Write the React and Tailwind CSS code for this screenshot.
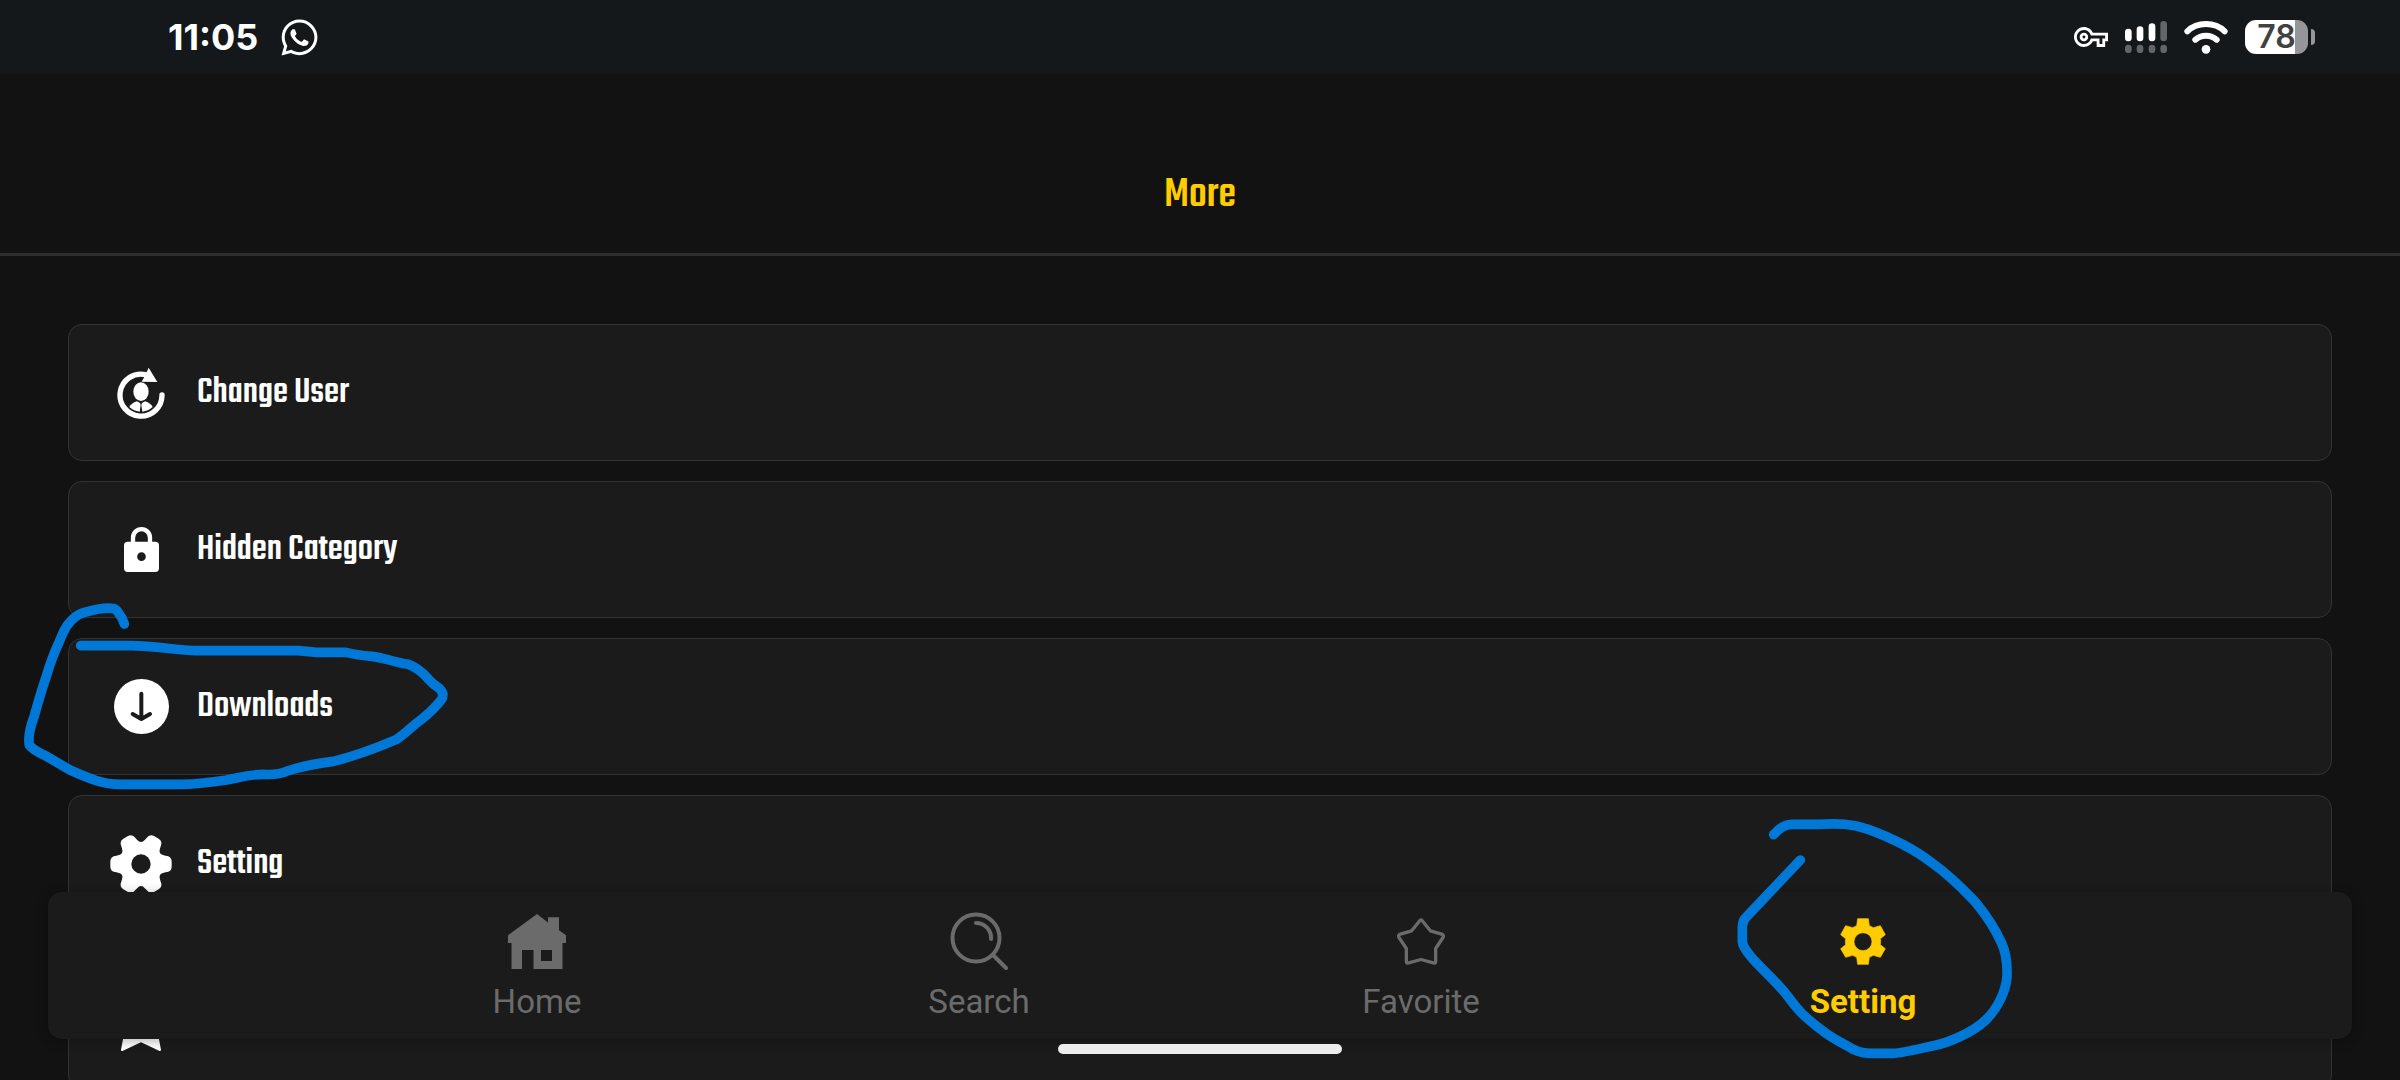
import React from "react";
import { FaWhatsapp } from "react-icons/fa";
import { MdOutlineVpnKey } from "react-icons/md";

const CONDENSED = "font-['Teko','Roboto_Condensed','Liberation_Sans_Narrow','Liberation_Sans',sans-serif]";

function SignalIcon() {
  return (
    <svg className="h-8 w-[42px]" viewBox="0 0 126 96" aria-hidden="true">
      <g fill="#fff">
        <rect x="0" y="23" width="20" height="38" rx="10" />
        <rect x="35" y="16" width="20" height="45" rx="10" />
        <rect x="71" y="7" width="20" height="54" rx="10" />
      </g>
      <g fill="#636568">
        <rect x="106" y="0" width="20" height="61" rx="10" />
        <rect x="0" y="71" width="20" height="25" rx="10" />
        <rect x="35" y="71" width="20" height="25" rx="10" />
        <rect x="71" y="71" width="20" height="25" rx="10" />
        <rect x="106" y="71" width="20" height="25" rx="10" />
      </g>
    </svg>
  );
}

function WifiIcon() {
  return (
    <svg className="h-[33px] w-11" viewBox="0 0 132 99" fill="none" stroke="#fff" strokeWidth="18" strokeLinecap="round" aria-hidden="true">
      <path d="M10 31C40 2 92 2 122 31" />
      <path d="M34 56C52 40 80 40 98 56" />
      <circle cx="66" cy="85" r="13" fill="#fff" stroke="none" />
    </svg>
  );
}

function Battery() {
  return (
    <div className="flex items-center gap-[3px]">
      <div className="flex h-[34px] w-[63px] items-center justify-center rounded-[11px] bg-linear-to-r from-white from-80% to-[#949699] to-80%">
        <span className="font-['Inter',sans-serif] text-[32px] font-semibold leading-8 text-[#424242]">78</span>
      </div>
      <span className="h-4 w-1 rounded-r-full bg-[#949699]" />
    </div>
  );
}

function ChangeUserIcon() {
  return (
    <svg className="h-[52px] w-12" viewBox="0 0 144 156" fill="#fff" aria-hidden="true">
      <path d="M135 84A63 63 0 1 1 86 23" fill="none" stroke="#fff" strokeWidth="16" strokeLinecap="round" />
      <path d="M95 2L121 45L74 44L84 26Z" />
      <ellipse cx="72" cy="74" rx="23" ry="28" />
      <path d="M60 103L69 108L71 114L68 134Q50 132 37 120Q42 109 60 103Z" />
      <path d="M84 103L75 108L73 114L76 134Q94 132 107 120Q102 109 84 103Z" />
    </svg>
  );
}

function LockIcon() {
  return (
    <svg className="h-[45px] w-[35px]" viewBox="0 0 105 135" fill="#fff" aria-hidden="true">
      <path d="M27 50V32a25.500 25.500 0 0 1 51 0V50" fill="none" stroke="#fff" strokeWidth="13" />
      <path fillRule="evenodd" d="M11 44H94Q105 44 105 55V124Q105 135 94 135H11Q0 135 0 124V55Q0 44 11 44ZM52.500 76a13 13 0 1 0 0 26a13 13 0 1 0 0-26Z" />
    </svg>
  );
}

function DownloadIcon() {
  return (
    <svg className="h-[55px] w-[55px]" viewBox="0 0 165 165" aria-hidden="true">
      <circle cx="82.500" cy="82.500" r="82.500" fill="#fff" />
      <path d="M82 44V118M56 105L82 120L108 105" fill="none" stroke="#1b1b1b" strokeWidth="12" strokeLinecap="round" strokeLinejoin="round" />
    </svg>
  );
}

function CogIcon() {
  return (
    <svg className="h-[62px] w-[62px] shrink-0" viewBox="-93 -93 186 186" fill="#fff" aria-hidden="true">
      {[0, 60, 120, 180, 240, 300].map((angle) => (
        <path
          key={angle}
          transform={`rotate(${angle})`}
          d="M0 0L57 -33C60 -28 66 -27 74 -25Q92 -23 92 -8V8Q92 23 74 25C66 27 60 28 57 33Z"
        />
      ))}
      <circle r="65" />
      <circle r="29" fill="#1b1b1b" />
    </svg>
  );
}

function RateIcon() {
  return (
    <svg className="h-[60px] w-[62px]" viewBox="0 0 62 60" fill="#fff" stroke="#fff" strokeWidth="2" strokeLinejoin="round" aria-hidden="true">
      <path d="M31 2L39 21L60 23L46 38L50 59L31 50L12 59L16 38L2 23L23 21Z" />
    </svg>
  );
}

function HomeIcon() {
  return (
    <svg className="h-[55px] w-[58px]" viewBox="0 0 58 55" fill="currentColor" aria-hidden="true">
      <path fillRule="evenodd" d="M29 0L40 8.500V3.300H51V16.300L58 21.300V29H54.500V55H25.500V36H14V55H3.500V29H0V21.300ZM33 36V47H44V36Z" />
    </svg>
  );
}

function SearchIcon() {
  return (
    <svg className="h-[58px] w-[58px]" viewBox="0 0 58 58" fill="none" stroke="currentColor" strokeWidth="4" strokeLinecap="round" aria-hidden="true">
      <circle cx="26" cy="26" r="23.500" />
      <path d="M26 11A15 15 0 0 1 41 27M43 43L56 56" />
    </svg>
  );
}

function StarIcon() {
  return (
    <svg className="h-[47px] w-12" viewBox="0 0 144 140" fill="none" stroke="currentColor" strokeWidth="10" strokeLinejoin="round" aria-hidden="true">
      <path d="M67 9Q72 2 77 9L100 38L134 48Q142 51 138 58L116 91V130Q116 137 109 134L72 124L35 134Q28 137 28 130V91L6 58Q2 51 10 48L44 38Z" />
    </svg>
  );
}

function SettingsIcon() {
  return (
    <svg className="h-[47px] w-[46px]" viewBox="420 355 138 141" fill="currentColor" aria-hidden="true">
      <path
        fillRule="evenodd"
        stroke="currentColor"
        strokeWidth="2"
        strokeLinejoin="round"
        d="M473 357H505L508 378L520 384L541 378L556 405L541 417Q543 426 541 435L556 447L541 473L520 467L508 473L505 494H473L470 473L458 467L437 473L422 447L437 435Q435 426 437 417L422 405L437 378L458 384L470 378ZM489 399a27 27 0 1 0 0 54a27 27 0 1 0 0-54Z"
      />
    </svg>
  );
}

function DownloadsMark() {
  return (
    <svg
      className="pointer-events-none absolute -left-[68px] -top-12 z-10 h-[210px] w-[480px]"
      viewBox="0 0 1440 630"
      fill="none"
      stroke="#0078d8"
      strokeWidth="29"
      strokeLinecap="round"
      strokeLinejoin="round"
      aria-hidden="true"
    >
      <path d="M373 102Q368 84 357 71Q349 55 336 55Q306 52 250 68Q225 75 201 107Q188 127 181 148Q155 205 143 246Q116 328 103 378Q82 433 88 465Q98 480 138 498L210 540C270 567 310 583 360 583H550Q600 582 680 570C720 563 740 554 790 553Q835 556 862 543Q915 525 1000 514C1070 497 1130 474 1188 449C1210 437 1240 405 1262 390Q1300 360 1324 329Q1335 312 1318 295Q1298 282 1286 268Q1260 237 1225 223C1180 216 1150 202 1115 199Q1070 195 1038 187H950L895 182H590C530 182 460 166 390 167H242" />
    </svg>
  );
}

function SettingMark() {
  return (
    <svg
      className="pointer-events-none absolute -top-[92px] left-1/2 -ml-[163px] h-[280px] w-[360px]"
      viewBox="0 0 1080 840"
      fill="none"
      stroke="#0078d8"
      strokeWidth="29"
      strokeLinecap="round"
      strokeLinejoin="round"
      aria-hidden="true"
    >
      <path d="M221 104Q246 74 275 73H345C420 70 455 70 505 88C570 112 640 145 695 188C740 220 790 268 825 305C850 335 885 385 905 430C919 460 922 500 921 530C918 570 895 625 856 661C815 700 740 730 700 737C650 748 610 759 580 760H510C480 759 465 752 440 737C405 719 380 703 358 685C310 648 295 632 262 587C225 540 180 503 152 469Q128 440 127 425V380Q128 360 140 350L301 180" />
    </svg>
  );
}

const rows = [
  { label: "Change User", Icon: ChangeUserIcon },
  { label: "Hidden Category", Icon: LockIcon },
  { label: "Downloads", Icon: DownloadIcon, Mark: DownloadsMark },
  { label: "Setting", Icon: CogIcon },
  { label: "Rate Us", Icon: RateIcon },
];

const tabs = [
  { label: "Home", Icon: HomeIcon },
  { label: "Search", Icon: SearchIcon },
  { label: "Favorite", Icon: StarIcon },
  { label: "Setting", Icon: SettingsIcon, active: true, Mark: SettingMark },
];

export default function App() {
  return (
    <div className="relative h-screen overflow-hidden bg-[#121212] text-white">
      <div className="flex h-[74px] items-center justify-between bg-[#14181b] pl-[168px] pr-[85px]">
        <div className="flex items-center gap-[21px]">
          <time className="font-['Inter',sans-serif] text-4xl font-bold">11:05</time>
          <FaWhatsapp className="size-[41px]" aria-label="WhatsApp" />
        </div>
        <div className="flex items-center gap-[17px]">
          <MdOutlineVpnKey className="size-[34px]" aria-hidden="true" />
          <SignalIcon />
          <WifiIcon />
          <Battery />
        </div>
      </div>

      <header className="flex h-[182px] items-center justify-center border-b-[3px] border-[#2e2e2e] pt-[65px]">
        <h1 className={`${CONDENSED} text-[44px] font-medium leading-none text-[#ffcc00]`}>More</h1>
      </header>

      <main className="flex flex-col gap-5 px-[68px] pt-[68px]">
        {rows.map(({ label, Icon, Mark }) => (
          <div key={label} className="relative">
            <button type="button" className="flex h-[137px] w-full items-center gap-[21px] rounded-[14px] border border-[#333] bg-[#1b1b1b] pl-[37px] text-left">
              <span className="flex w-[70px] shrink-0 justify-center">
                <Icon />
              </span>
              <span className={`${CONDENSED} text-[38px] font-medium leading-none`}>{label}</span>
            </button>
            {Mark && <Mark />}
          </div>
        ))}
      </main>

      <nav className="absolute inset-x-12 bottom-[41px] z-20 grid h-[147px] grid-cols-4 rounded-[14px] bg-[#1b1b1b] px-[268px] shadow-[0_2px_12px_rgba(0,0,0,0.3)]">
        {tabs.map(({ label, Icon, active, Mark }) => (
          <div key={label} className="relative">
            <button
              type="button"
              aria-current={active ? "page" : undefined}
              className={`flex w-full flex-col items-center gap-[13px] pt-[21px] ${active ? "font-bold text-[#ffcc00]" : "text-[#6b6b6b]"}`}
            >
              <span className="flex h-14 items-center">
                <Icon />
              </span>
              <span className="font-['Roboto',sans-serif] text-[33px] leading-10">{label}</span>
            </button>
            {Mark && <Mark />}
          </div>
        ))}
      </nav>

      <div className="absolute bottom-[26px] left-1/2 z-20 h-2.5 w-[284px] -translate-x-1/2 rounded-full bg-[#ececec]" />
    </div>
  );
}
